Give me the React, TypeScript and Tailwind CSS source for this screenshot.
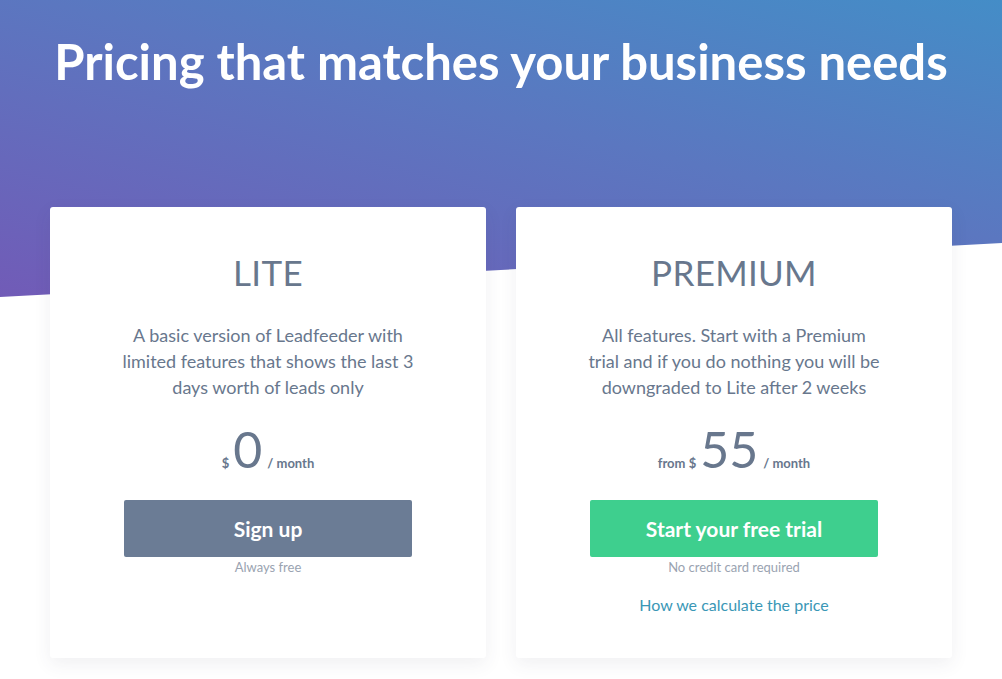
const plans = [
  {
    name: "LITE",
    description:
      "A basic version of Leadfeeder with limited features that shows the last 3 days worth of leads only",
    prefix: "$",
    price: "0",
    cta: "Sign up",
    note: "Always free",
    buttonClass: "bg-[#6b7c95]",
    link: null as string | null,
  },
  {
    name: "PREMIUM",
    description:
      "All features. Start with a Premium trial and if you do nothing you will be downgraded to Lite after 2 weeks",
    prefix: "from $",
    price: "55",
    cta: "Start your free trial",
    note: "No credit card required",
    buttonClass: "bg-[#3ecf8e]",
    link: "How we calculate the price",
  },
];

export default function App() {
  return (
    <div className="relative min-h-[679px] bg-white font-['Lato','Open_Sans',sans-serif] text-[#68778d] overflow-hidden">
      <div className="absolute inset-x-0 top-0 h-[297px] bg-[linear-gradient(14deg,#715bb7_0%,#5b77c0_56%,#448dc7_100%)] [clip-path:polygon(0_0,100%_0,100%_243px,0_297px)]" />
      <div className="relative">
        <h1 className="pt-[31px] text-center text-[49px] font-bold leading-[60px] text-white">
          Pricing that matches your business needs
        </h1>
        <div className="mt-[116px] flex justify-center gap-[30px] px-[50px]">
          {plans.map((plan) => (
            <div
              key={plan.name}
              className="flex h-[451px] w-[437px] flex-col items-center rounded-[3px] bg-white pt-[45px] shadow-[0_6px_18px_rgba(60,70,90,0.08)]"
            >
              <h2 className="text-[35px] font-normal leading-[40px] tracking-[0.3px]">
                {plan.name}
              </h2>
              <p className="mt-[30px] w-[298px] text-center text-[18px] leading-[26px]">
                {plan.description}
              </p>
              <div className="mt-[21px] flex items-baseline justify-center">
                <span className="mr-[4px] text-[13px] font-bold">{plan.prefix}</span>
                <span className="text-[50px] font-normal leading-[56px]">{plan.price}</span>
                <span className="ml-[5px] text-[13px] font-bold">/ month</span>
              </div>
              <button
                className={`mt-[23px] h-[57px] w-[288px] rounded-[2px] text-[21px] font-bold text-white ${plan.buttonClass}`}
              >
                {plan.cta}
              </button>
              <div className="mt-0 text-[13px] leading-[20px] text-[#9aa3b1]">
                {plan.note}
              </div>
              <div className="h-[17px]" />
              {plan.link && (
                <a className="text-[16px] leading-[22px] text-[#3a97b6]" href="#">
                  {plan.link}
                </a>
              )}
            </div>
          ))}
        </div>
      </div>
    </div>
  );
}
